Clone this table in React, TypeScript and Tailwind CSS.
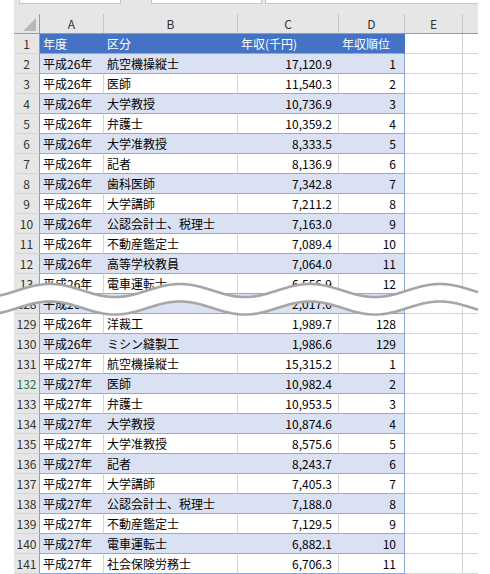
const font = "font-['Noto_Sans_CJK_JP','Noto_Sans',sans-serif]";

type Row = { n: number; year: string; job: string; income: string; rank: string };

const r26 = (n: number, job: string, income: string, rank: string): Row => ({ n, year: "平成26年", job, income, rank });
const r27 = (n: number, job: string, income: string, rank: string): Row => ({ n, year: "平成27年", job, income, rank });

const rows: Row[] = [
  r26(2, "航空機操縦士", "17,120.9", "1"),
  r26(3, "医師", "11,540.3", "2"),
  r26(4, "大学教授", "10,736.9", "3"),
  r26(5, "弁護士", "10,359.2", "4"),
  r26(6, "大学准教授", "8,333.5", "5"),
  r26(7, "記者", "8,136.9", "6"),
  r26(8, "歯科医師", "7,342.8", "7"),
  r26(9, "大学講師", "7,211.2", "8"),
  r26(10, "公認会計士、税理士", "7,163.0", "9"),
  r26(11, "不動産鑑定士", "7,089.4", "10"),
  r26(12, "高等学校教員", "7,064.0", "11"),
  r26(13, "電車運転士", "6,556.9", "12"),
  r26(128, "清掃員", "2,017.0", "127"),
  r26(129, "洋裁工", "1,989.7", "128"),
  r26(130, "ミシン縫製工", "1,986.6", "129"),
  r27(131, "航空機操縦士", "15,315.2", "1"),
  r27(132, "医師", "10,982.4", "2"),
  r27(133, "弁護士", "10,953.5", "3"),
  r27(134, "大学教授", "10,874.6", "4"),
  r27(135, "大学准教授", "8,575.6", "5"),
  r27(136, "記者", "8,243.7", "6"),
  r27(137, "大学講師", "7,405.3", "7"),
  r27(138, "公認会計士、税理士", "7,188.0", "8"),
  r27(139, "不動産鑑定士", "7,129.5", "9"),
  r27(140, "電車運転士", "6,882.1", "10"),
  r27(141, "社会保険労務士", "6,706.3", "11"),
];

const RowNum = ({ n }: { n: number }) => (
  <div
    className={`w-[26px] shrink-0 flex items-center justify-center bg-[#e6e6e6] border-r border-b border-r-[#9b9b9b] border-b-[#d4d4d4] ${
      n === 132 ? "text-[#217346]" : "text-[#333]"
    }`}
  >
    {n}
  </div>
);

const Blank = () => (
  <>
    <div className="w-[58px] shrink-0 bg-white border-r border-b border-[#d4d4d4]" />
    <div className="w-[15px] shrink-0 bg-white border-b border-[#d4d4d4]" />
  </>
);

const DataRow = ({ r }: { r: Row }) => {
  const blue = r.n % 2 === 0;
  const cell = blue
    ? "bg-[#d9e1f2] border-r border-b border-r-[#d9e1f2] border-b-[#8ea9db]"
    : "bg-white border-r border-b border-r-[#d4d4d4] border-b-[#8ea9db]";
  const last = blue
    ? "bg-[#d9e1f2] border-r border-b border-[#8ea9db]"
    : "bg-white border-r border-b border-[#8ea9db]";
  return (
    <div className="flex h-[20px] text-black">
      <RowNum n={r.n} />
      <div className={`w-[64px] shrink-0 flex items-center pl-[3px] ${cell}`}>{r.year}</div>
      <div className={`w-[134px] shrink-0 flex items-center pl-[3px] whitespace-nowrap ${cell}`}>{r.job}</div>
      <div className={`w-[101px] shrink-0 flex items-center justify-end pr-[6px] ${cell}`}>{r.income}</div>
      <div className={`w-[66px] shrink-0 flex items-center justify-end pr-[8px] ${last}`}>{r.rank}</div>
      <Blank />
    </div>
  );
};

// the squiggly "rows omitted" band laid over rows 13 / 128
const Wave = () => {
  const top = (x: number) => 290.5 - 6.5 * Math.cos((2 * Math.PI * (x - 440)) / 130) - 270;
  const xs: number[] = [];
  for (let x = -4; x <= 479; x += 2) xs.push(x);
  const upper = xs.map((x) => `${x},${top(x).toFixed(2)}`);
  const lower = xs.map((x) => `${x},${(top(x) + 17.5).toFixed(2)}`);
  const fill = `M${upper.join(" L")} L${[...lower].reverse().join(" L")} Z`;
  return (
    <svg className="absolute left-0 top-[270px]" width={490} height={50} viewBox="0 0 490 50">
      <path d={fill} fill="#fff" />
      <path d={`M${upper.join(" L")}`} fill="none" stroke="#a6a6a6" strokeWidth={2.6} />
      <path d={`M${lower.join(" L")}`} fill="none" stroke="#a6a6a6" strokeWidth={2.6} />
    </svg>
  );
};

export default function App() {
  return (
    <div className={`relative w-[490px] h-[574px] overflow-hidden bg-white flex text-[12px] ${font}`}>
      <div className="w-[14px] shrink-0" />
      <div className="w-[464px] shrink-0 flex flex-col">
        {/* tabs / boxes of the bar above the sheet */}
        <div className="h-[4px] flex bg-[#e6e6e6]">
          <div className="w-[5px]" />
          <div className="w-[102px] bg-white border-x border-b border-[#c6c6c6]" />
          <div className="w-[30px]" />
          <div className="w-[111px] bg-white border-x border-b border-[#c6c6c6]" />
          <div className="w-[3px]" />
          <div className="flex-1 bg-white border-l border-b border-[#c6c6c6]" />
        </div>
        <div className="h-[10px] bg-[#e6e6e6]" />

        {/* column letters */}
        <div className="flex h-[20px] bg-[#e6e6e6] border-b border-[#9b9b9b] text-[#333]">
          <div className="w-[26px] shrink-0 relative border-r border-[#9b9b9b]">
            <svg className="absolute left-[9px] top-[4px]" width={13} height={13} viewBox="0 0 13 13">
              <path d="M13 0 L13 13 L0 13 Z" fill="#b9b9b9" />
            </svg>
          </div>
          <div className="w-[64px] shrink-0 flex items-center justify-center border-r border-[#c6c6c6]">A</div>
          <div className="w-[134px] shrink-0 flex items-center justify-center border-r border-[#c6c6c6]">B</div>
          <div className="w-[101px] shrink-0 flex items-center justify-center border-r border-[#c6c6c6]">C</div>
          <div className="w-[66px] shrink-0 flex items-center justify-center border-r border-[#c6c6c6]">D</div>
          <div className="w-[58px] shrink-0 flex items-center justify-center border-r border-[#c6c6c6]">E</div>
          <div className="w-[15px] shrink-0" />
        </div>

        {/* table header row */}
        <div className="flex h-[20px] text-white">
          <RowNum n={1} />
          <div className="w-[64px] shrink-0 flex items-center pl-[3px] bg-[#4472c4] border-b border-[#8ea9db]">年度</div>
          <div className="w-[134px] shrink-0 flex items-center pl-[3px] bg-[#4472c4] border-b border-[#8ea9db]">区分</div>
          <div className="w-[101px] shrink-0 flex items-center pl-[3px] bg-[#4472c4] border-b border-[#8ea9db]">年収(千円)</div>
          <div className="w-[66px] shrink-0 flex items-center pl-[3px] bg-[#4472c4] border-b border-r border-b-[#8ea9db] border-r-[#4472c4]">年収順位</div>
          <Blank />
        </div>

        {rows.map((r) => (
          <DataRow key={r.n} r={r} />
        ))}
      </div>
      <div className="flex-1" />
      <Wave />
    </div>
  );
}
